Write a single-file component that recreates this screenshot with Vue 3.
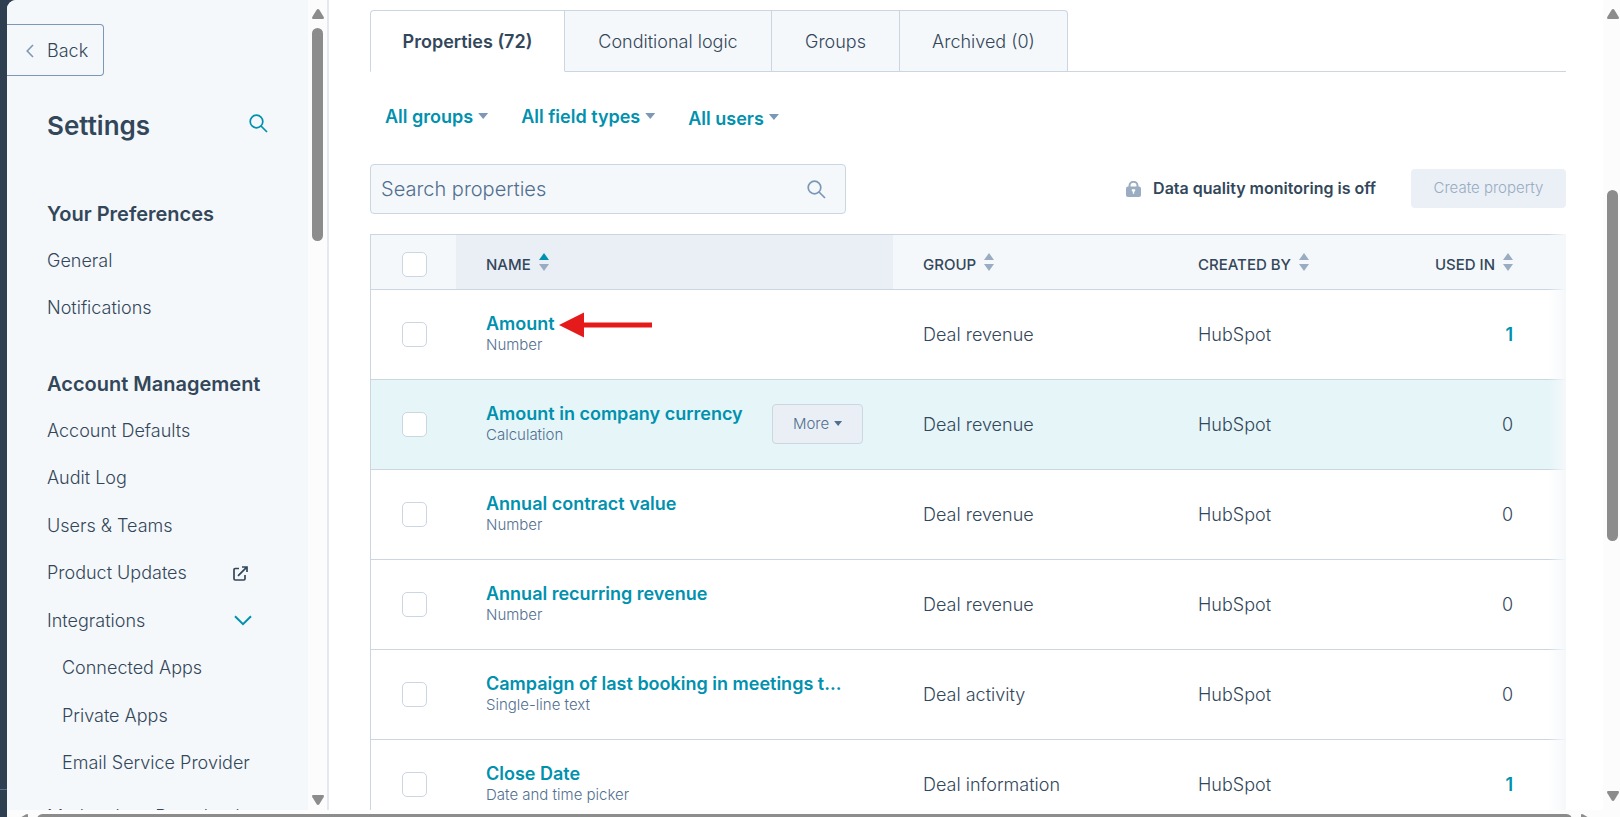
<script setup>
import { ref } from 'vue'

const search = ref('')

const preferences = ['General', 'Notifications']
const account = [
  { label: 'Account Defaults' },
  { label: 'Audit Log' },
  { label: 'Users & Teams' },
  { label: 'Product Updates', icon: 'external' },
  { label: 'Integrations', icon: 'chevron' },
  { label: 'Connected Apps', child: true },
  { label: 'Private Apps', child: true },
  { label: 'Email Service Provider', child: true },
  { label: 'Marketplace Downloads' },
]

const tabs = [
  { label: 'Properties (72)', key: 'properties', active: true },
  { label: 'Conditional logic', key: 'logic' },
  { label: 'Groups', key: 'groups' },
  { label: 'Archived (0)', key: 'archived' },
]

const rows = [
  { name: 'Amount', type: 'Number', group: 'Deal revenue', by: 'HubSpot', used: 1, arrow: true },
  { name: 'Amount in company currency', type: 'Calculation', group: 'Deal revenue', by: 'HubSpot', used: 0, hover: true },
  { name: 'Annual contract value', type: 'Number', group: 'Deal revenue', by: 'HubSpot', used: 0 },
  { name: 'Annual recurring revenue', type: 'Number', group: 'Deal revenue', by: 'HubSpot', used: 0 },
  { name: 'Campaign of last booking in meetings t...', type: 'Single-line text', group: 'Deal activity', by: 'HubSpot', used: 0 },
  { name: 'Close Date', type: 'Date and time picker', group: 'Deal information', by: 'HubSpot', used: 1 },
]

const columns = [
  { label: 'Name', key: 'name', sorted: true },
  { label: 'Group', key: 'group' },
  { label: 'Created by', key: 'by' },
  { label: 'Used in', key: 'used' },
]
</script>

<template>
  <div class="app">
    <div class="rail"><div class="rail-foot"></div></div>
    <div class="frame">
      <div class="panes">
        <aside class="sidebar">
          <nav class="side-content" aria-label="Settings">
            <button class="back" type="button">
              <svg width="8" height="14" viewBox="0 0 8 14"><path d="M7 1 1.2 7 7 13" /></svg>
              Back
            </button>
            <div class="side-title">
              <h1>Settings</h1>
              <button class="icon-button" type="button" aria-label="Search settings">
                <svg width="19" height="19" viewBox="0 0 19 19"><circle cx="7.5" cy="7.5" r="6.3" /><path d="m12 12 6 6" /></svg>
              </button>
            </div>
            <h2>Your Preferences</h2>
            <ul>
              <li v-for="item in preferences" :key="item"><a href="#">{{ item }}</a></li>
            </ul>
            <h2 class="second">Account Management</h2>
            <ul>
              <li v-for="item in account" :key="item.label" :class="{ child: item.child }">
                <a href="#">{{ item.label }}</a>
                <svg v-if="item.icon === 'external'" class="external" width="15" height="15" viewBox="0 0 15 15">
                  <path d="M6 2.500H2.200Q1 2.500 1 3.700v9Q1 14 2.200 14h8.600q1.200 0 1.200-1.200V9M5 9.800l8.500-8.500M9 1h5v5" />
                </svg>
                <svg v-if="item.icon === 'chevron'" class="chevron" width="18" height="11" viewBox="0 0 18 11">
                  <path d="m1 1.200 8 8 8-8" />
                </svg>
              </li>
            </ul>
          </nav>
          <div class="scrollbar side-scroll">
            <svg width="12" height="10" viewBox="0 0 12 10"><path d="M6 0q.8 0 1.300.7l4.300 7Q12.500 10 11 10H1Q-.5 10 .4 7.700l4.300-7Q5.200 0 6 0" /></svg>
            <div class="thumb"></div>
            <svg class="down" width="12" height="10" viewBox="0 0 12 10"><path d="M6 10q-.8 0-1.300-.7L.4 2.300Q-.5 0 1 0h10q1.500 0 .6 2.300l-4.300 7Q6.800 10 6 10" /></svg>
          </div>
        </aside>

        <main class="main">
          <div class="tabs" role="tablist">
            <button v-for="tab in tabs" :key="tab.key" type="button" role="tab" :aria-selected="!!tab.active"
              class="tab" :class="[tab.key, { active: tab.active }]">{{ tab.label }}</button>
            <div class="tab-rest"></div>
          </div>

          <div class="filters">
            <button type="button" class="filter"><span>All groups</span><i class="caret"></i></button>
            <button type="button" class="filter"><span>All field types</span><i class="caret"></i></button>
            <button type="button" class="filter lowered"><span>All users</span><i class="caret"></i></button>
          </div>

          <div class="toolbar">
            <label class="search">
              <input v-model="search" type="text" placeholder="Search properties" aria-label="Search properties" />
              <svg width="19" height="19" viewBox="0 0 19 19"><circle cx="7.5" cy="7.5" r="6.3" /><path d="m12 12 6 6" /></svg>
            </label>
            <div class="quality">
              <svg width="15" height="16" viewBox="0 0 15 16">
                <path class="shackle" d="M3.500 7V4.800a4 4 0 0 1 8 0V7" />
                <rect y="5.500" width="15" height="10.500" rx="2" />
                <path class="hole" d="M5.800 8.200h3.400v1.900l-1 .6v2H6.800v-2l-1-.6z" />
              </svg>
              <span>Data quality monitoring is off</span>
            </div>
            <button class="create" type="button" disabled>Create property</button>
          </div>

          <div class="table-wrap">
            <table>
              <colgroup>
                <col class="w-check" /><col class="w-name" /><col class="w-group" /><col class="w-by" /><col />
              </colgroup>
              <thead>
                <tr>
                  <th class="check"><input type="checkbox" aria-label="Select all properties" /></th>
                  <th v-for="col in columns" :key="col.key" scope="col" :class="[col.key, { sorted: col.sorted }]">
                    <span class="head">{{ col.label }}
                      <svg width="10" height="18" viewBox="0 0 10 18"><path class="up" d="m5 0 5 7H0z" /><path d="M0 11h10l-5 7z" /></svg>
                    </span>
                  </th>
                </tr>
              </thead>
              <tbody>
                <tr v-for="row in rows" :key="row.name" :class="{ hover: row.hover }">
                  <td class="check"><input type="checkbox" :aria-label="'Select ' + row.name" /></td>
                  <td class="name">
                    <div class="name-line">
                      <div class="name-text">
                        <a href="#">{{ row.name }}</a>
                        <small>{{ row.type }}</small>
                        <svg v-if="row.arrow" class="pointer" width="93" height="26" viewBox="0 0 93 26"><path d="M0 13 25 0.500V10.500H93V15.500H25V25.500z" /></svg>
                      </div>
                      <button v-if="row.hover" type="button" class="more">More <i class="caret"></i></button>
                    </div>
                  </td>
                  <td class="group">{{ row.group }}</td>
                  <td class="by">{{ row.by }}</td>
                  <td class="used"><a v-if="row.used" href="#">{{ row.used }}</a><template v-else>0</template></td>
                </tr>
              </tbody>
            </table>
            <div class="fade"></div>
          </div>
        </main>

        <div class="scrollbar page-scroll">
          <svg width="12" height="10" viewBox="0 0 12 10"><path d="M6 0q.8 0 1.300.7l4.300 7Q12.500 10 11 10H1Q-.5 10 .4 7.700l4.300-7Q5.200 0 6 0" /></svg>
          <div class="thumb"></div>
          <svg class="down" width="12" height="10" viewBox="0 0 12 10"><path d="M6 10q-.8 0-1.300-.7L.4 2.300Q-.5 0 1 0h10q1.500 0 .6 2.300l-4.300 7Q6.800 10 6 10" /></svg>
        </div>
      </div>

      <div class="bottom-scroll">
        <svg width="10" height="12" viewBox="0 0 10 12"><path d="M0 6q0-.8.7-1.300l7-4.300Q10-.5 10 1v10q0 1.500-2.300.6l-7-4.300Q0 6.800 0 6" /></svg>
        <div class="thumb"></div>
        <svg width="10" height="12" viewBox="0 0 10 12"><path d="M10 6q0-.8-.7-1.300l-7-4.300Q0-.5 0 1v10q0 1.500 2.300.6l7-4.300Q10 6.800 10 6" /></svg>
      </div>
    </div>
  </div>
</template>

<style>
body {
  margin: 0;
  background: #fff;
}
</style>

<style scoped>
* {
  box-sizing: border-box;
}
.app {
  display: flex;
  height: 100vh;
  overflow: hidden;
  background: #2e3f52;
  color: #33475b;
  font-family: Inter, "Open Sans", sans-serif;
  font-size: 18px;
  font-weight: 300;
  line-height: 24px;
}
button,
input {
  font: inherit;
  color: inherit;
}
button {
  padding: 0;
  border: 0;
  background: none;
}
a {
  color: inherit;
  text-decoration: none;
}
svg {
  flex: none;
  display: block;
}
.rail {
  display: flex;
  flex-direction: column;
  justify-content: flex-end;
  flex: 0 0 7px;
}
.rail-foot {
  height: 28px;
  border-top: 1px solid #516f90;
}
.frame {
  flex: 1;
  min-width: 0;
  display: flex;
  flex-direction: column;
  border-radius: 9px 0 0 0;
  overflow: hidden;
  background: #fcfcfc;
}
.panes {
  flex: 1;
  min-height: 0;
  display: flex;
}
.sidebar {
  display: flex;
  flex: 0 0 322px;
  overflow: hidden;
  background: #f5f8fa;
  border-right: 2px solid #e5e8f0;
}
.side-content {
  flex: 1;
  min-width: 0;
}
.back {
  display: flex;
  align-items: center;
  gap: 13px;
  width: 97px;
  height: 52px;
  margin-top: 24px;
  padding: 1px 0 0 19px;
  border: 1px solid #7c98b6;
  border-left: 0;
  border-radius: 0 4px 4px 0;
}
.back svg {
  fill: none;
  stroke: #7c98b6;
  stroke-width: 1.6;
}
.side-title {
  display: flex;
  align-items: center;
  justify-content: space-between;
  padding: 0 40px;
  margin-top: 32px;
}
h1 {
  margin: 0;
  font-size: 26px;
  line-height: 36px;
  font-weight: 600;
}
.icon-button svg {
  fill: none;
  stroke: #0091ae;
  stroke-width: 1.7;
  margin-bottom: 6px;
}
h2 {
  margin: 56px 0 9px 40px;
  font-size: 20px;
  line-height: 28px;
  font-weight: 600;
}
h2.second {
  margin-top: 38px;
}
ul {
  margin: 0;
  padding: 0;
  list-style: none;
}
li {
  display: flex;
  align-items: center;
  justify-content: space-between;
  height: 47px;
  padding: 0 56px 0 40px;
  white-space: nowrap;
}
li:nth-child(even) {
  height: 48px;
}
li.child {
  padding-left: 55px;
}
li.child + li:not(.child) {
  margin-top: 6px;
}
.external {
  margin-right: 4px;
  fill: none;
  stroke: #33475b;
  stroke-width: 1.7;
}
.chevron {
  fill: none;
  stroke: #0091ae;
  stroke-width: 2;
}
.scrollbar {
  display: flex;
  flex-direction: column;
  align-items: center;
  background: #fcfcfc;
  padding: 9px 0 5px;
}
.side-scroll {
  flex: 0 0 19px;
}
.page-scroll {
  flex: 0 0 17px;
  padding: 9px 0 9px 2px;
}
.scrollbar svg,
.bottom-scroll svg {
  fill: #8c8c8c;
}
.thumb {
  background: #8c8c8c;
  border-radius: 6px;
}
.scrollbar .thumb {
  width: 11px;
}
.side-scroll .thumb {
  height: 213px;
  margin-top: 9px;
}
.page-scroll .thumb {
  height: 351px;
  margin-top: 171px;
}
.down {
  margin-top: auto;
}
.bottom-scroll {
  flex: 0 0 7px;
  display: flex;
  gap: 9px;
  padding: 4px 29px 0 11px;
  overflow: hidden;
}
.bottom-scroll .thumb {
  flex: 1;
  height: 11px;
}
.main {
  flex: 1;
  min-width: 0;
  overflow: hidden;
  background: #fff;
  padding: 10px 37px 0 41px;
}
.tabs {
  display: flex;
  height: 62px;
}
.tab {
  padding-top: 2px;
  border: 1px solid #cbd6e2;
  border-left-width: 0;
  background: #f5f8fa;
}
.tab.properties {
  flex: 0 0 195px;
  border-left-width: 1px;
  border-radius: 4px 0 0 0;
}
.tab.logic {
  flex: 0 0 207px;
}
.tab.groups {
  flex: 0 0 128px;
}
.tab.archived {
  flex: 0 0 168px;
  border-radius: 0 4px 0 0;
}
.tab.active {
  background: #fff;
  border-bottom-color: #fff;
  font-weight: 600;
}
.tab-rest {
  flex: 1;
  border-bottom: 1px solid #cbd6e2;
}
.filters {
  display: flex;
  gap: 33px;
  height: 92px;
  padding: 33px 0 0 15px;
}
.filter {
  display: flex;
  align-items: center;
  gap: 5px;
  height: 24px;
  color: #0091ae;
  font-weight: 600;
}
.filter.lowered {
  margin-top: 2px;
}
.caret {
  flex: none;
  width: 10px;
  height: 6px;
  margin-bottom: 2px;
  background: #7c98b6;
  clip-path: polygon(0 0, 100% 0, 50% 100%);
}
.lowered .caret {
  margin-bottom: 4px;
}
.toolbar {
  display: flex;
  align-items: center;
}
.search {
  display: flex;
  align-items: center;
  width: 476px;
  height: 50px;
  padding: 0 19px 0 10px;
  border: 1px solid #cbd6e2;
  border-radius: 4px;
  background: #f5f8fa;
}
.search input {
  flex: 1;
  min-width: 0;
  padding: 0;
  border: 0;
  outline: 0;
  background: none;
  font-size: 20px;
}
.search input::placeholder {
  color: #516f90;
  opacity: 1;
}
.search svg {
  fill: none;
  stroke: #7c98b6;
  stroke-width: 1.7;
}
.quality {
  display: flex;
  align-items: center;
  gap: 12px;
  margin: 0 0 2px auto;
  font-size: 16px;
  font-weight: 600;
}
.quality svg {
  margin-top: 2px;
  fill: #99acc2;
}
.quality .shackle {
  fill: none;
  stroke: #99acc2;
  stroke-width: 2;
}
.quality .hole {
  fill: #fff;
}
.create {
  width: 155px;
  height: 39px;
  margin: 0 0 2px 35px;
  border-radius: 4px;
  background: #eaf0f6;
  color: #99acc2;
  font-size: 15px;
}
.table-wrap {
  position: relative;
  margin-top: 20px;
}
table {
  width: 100%;
  table-layout: fixed;
  border-collapse: separate;
  border-spacing: 0;
  border: 1px solid #cbd6e2;
  border-right: 0;
}
.w-check {
  width: 85px;
}
.w-name {
  width: 437px;
}
.w-group {
  width: 275px;
}
.w-by {
  width: 203px;
}
th,
td {
  padding: 0 0 0 30px;
  border-bottom: 1px solid #cbd6e2;
  text-align: left;
}
th {
  height: 55px;
  padding-top: 5px;
  background: #f5f8fa;
  font-size: 15px;
  font-weight: 500;
  text-transform: uppercase;
}
td {
  height: 90px;
}
.check {
  padding-left: 31px;
}
th.sorted {
  background: #eaeff6;
}
th.used,
td.used {
  padding-left: 0;
  padding-right: 53px;
  text-align: right;
}
.head {
  display: inline-flex;
  align-items: center;
  gap: 8px;
}
.head svg {
  margin-bottom: 6px;
  fill: #99acc2;
}
.sorted .up {
  fill: #0091ae;
}
input[type="checkbox"] {
  appearance: none;
  display: block;
  width: 25px;
  height: 25px;
  margin: 0;
  border: 1px solid #cbd6e2;
  border-radius: 5px;
  background: #fff;
}
tr.hover td {
  background: #e5f5f8;
}
td.name {
  padding-bottom: 4px;
}
.name-line {
  display: flex;
  align-items: center;
  justify-content: space-between;
  padding-right: 30px;
}
.name-text {
  position: relative;
  white-space: nowrap;
}
.name-text a,
.name-text small {
  display: block;
}
.name-text a,
.used a {
  color: #0091ae;
  font-weight: 600;
}
.name-text small {
  color: #516f90;
  font-size: 15px;
  line-height: 18px;
}
.pointer {
  position: absolute;
  left: calc(100% + 4px);
  top: 0;
  fill: #e51a1a;
}
.more {
  display: flex;
  align-items: center;
  justify-content: center;
  gap: 5px;
  width: 91px;
  height: 40px;
  margin-top: 2px;
  border: 1px solid #cbd6e2;
  border-radius: 4px;
  background: #eaeff6;
  color: #516f90;
  font-size: 15px;
}
.more .caret {
  width: 8px;
  height: 5px;
  margin: 0;
  background: #516f90;
}
.fade {
  position: absolute;
  top: 0;
  right: 0;
  bottom: 0;
  width: 18px;
  background: linear-gradient(to right, rgba(245, 248, 250, 0), #f5f8fa);
}
</style>
